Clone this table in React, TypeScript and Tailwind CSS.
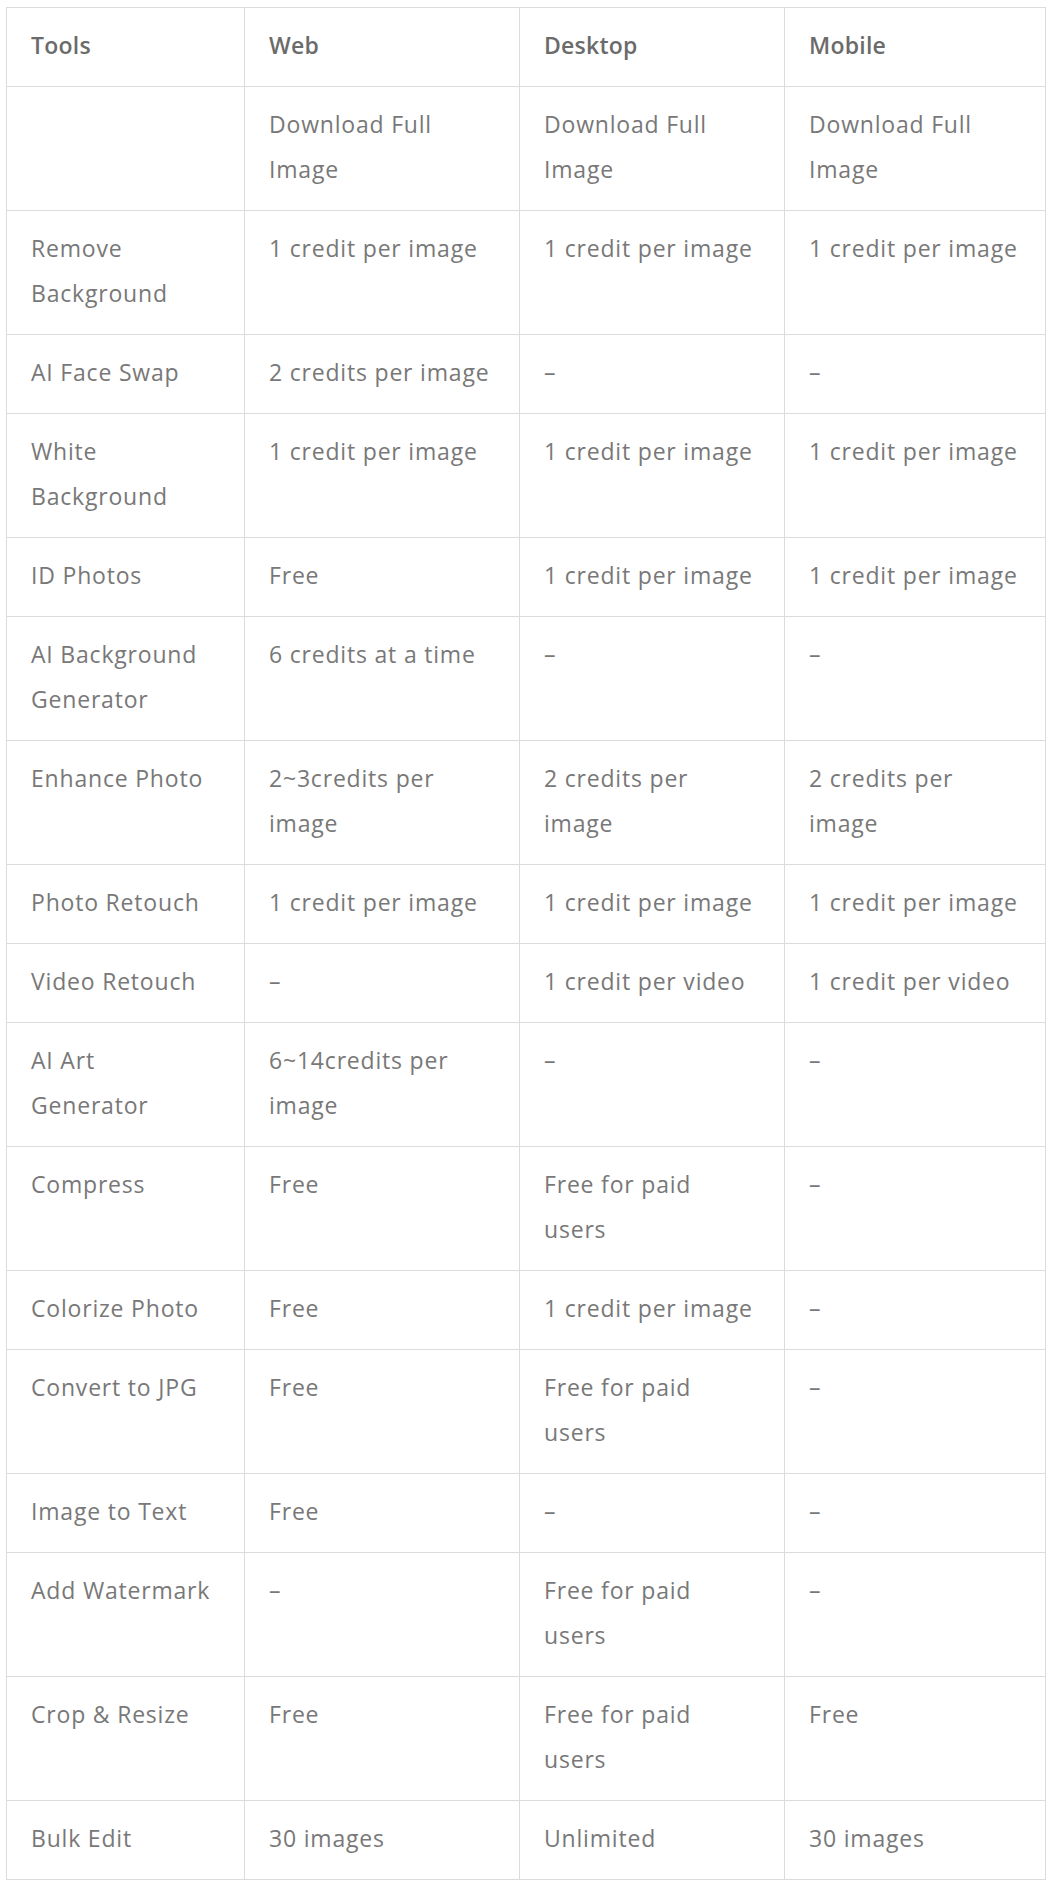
import React from 'react';

type Cell = string[];

const header = ['Tools', 'Web', 'Desktop', 'Mobile'];

// each cell is a list of lines, broken where the reference wraps
const rows: Cell[][] = [
  [[''], ['Download Full', 'Image'], ['Download Full', 'Image'], ['Download Full', 'Image']],
  [['Remove', 'Background'], ['1 credit per image'], ['1 credit per image'], ['1 credit per image']],
  [['AI Face Swap'], ['2 credits per image'], ['–'], ['–']],
  [['White', 'Background'], ['1 credit per image'], ['1 credit per image'], ['1 credit per image']],
  [['ID Photos'], ['Free'], ['1 credit per image'], ['1 credit per image']],
  [['AI Background', 'Generator'], ['6 credits at a time'], ['–'], ['–']],
  [['Enhance Photo'], ['2~3credits per', 'image'], ['2 credits per', 'image'], ['2 credits per', 'image']],
  [['Photo Retouch'], ['1 credit per image'], ['1 credit per image'], ['1 credit per image']],
  [['Video Retouch'], ['–'], ['1 credit per video'], ['1 credit per video']],
  [['AI Art', 'Generator'], ['6~14credits per', 'image'], ['–'], ['–']],
  [['Compress'], ['Free'], ['Free for paid', 'users'], ['–']],
  [['Colorize Photo'], ['Free'], ['1 credit per image'], ['–']],
  [['Convert to JPG'], ['Free'], ['Free for paid', 'users'], ['–']],
  [['Image to Text'], ['Free'], ['–'], ['–']],
  [['Add Watermark'], ['–'], ['Free for paid', 'users'], ['–']],
  [['Crop & Resize'], ['Free'], ['Free for paid', 'users'], ['Free']],
  [['Bulk Edit'], ['30 images'], ['Unlimited'], ['30 images']],
];

const cellClass =
  'border border-[#dcdcdc] pl-[24px] pr-[8px] pt-[15px] pb-[18px] align-top leading-[45px] whitespace-nowrap';

export default function App() {
  return (
    <div
      className="bg-white min-h-[1885px] pt-[7px] pl-[6px]"
      style={{ fontFamily: '"Open Sans", Lato, sans-serif' }}
    >
      <table className="table-fixed border-collapse w-[1039px] text-[23px] tracking-[0.035em] text-[#787878]">
        <colgroup>
          <col className="w-[238px]" />
          <col className="w-[275px]" />
          <col className="w-[265px]" />
          <col className="w-[261px]" />
        </colgroup>
        <thead>
          <tr>
            {header.map((h) => (
              <th key={h} className={`${cellClass} text-left font-semibold tracking-[0.01em] text-[#6b6b6b]`}>
                {h}
              </th>
            ))}
          </tr>
        </thead>
        <tbody>
          {rows.map((row, i) => (
            <tr key={i}>
              {row.map((cell, j) => (
                <td key={j} className={cellClass}>
                  {cell.map((line, k) => (
                    <div key={k}>{line || '\u00a0'}</div>
                  ))}
                </td>
              ))}
            </tr>
          ))}
        </tbody>
      </table>
    </div>
  );
}
